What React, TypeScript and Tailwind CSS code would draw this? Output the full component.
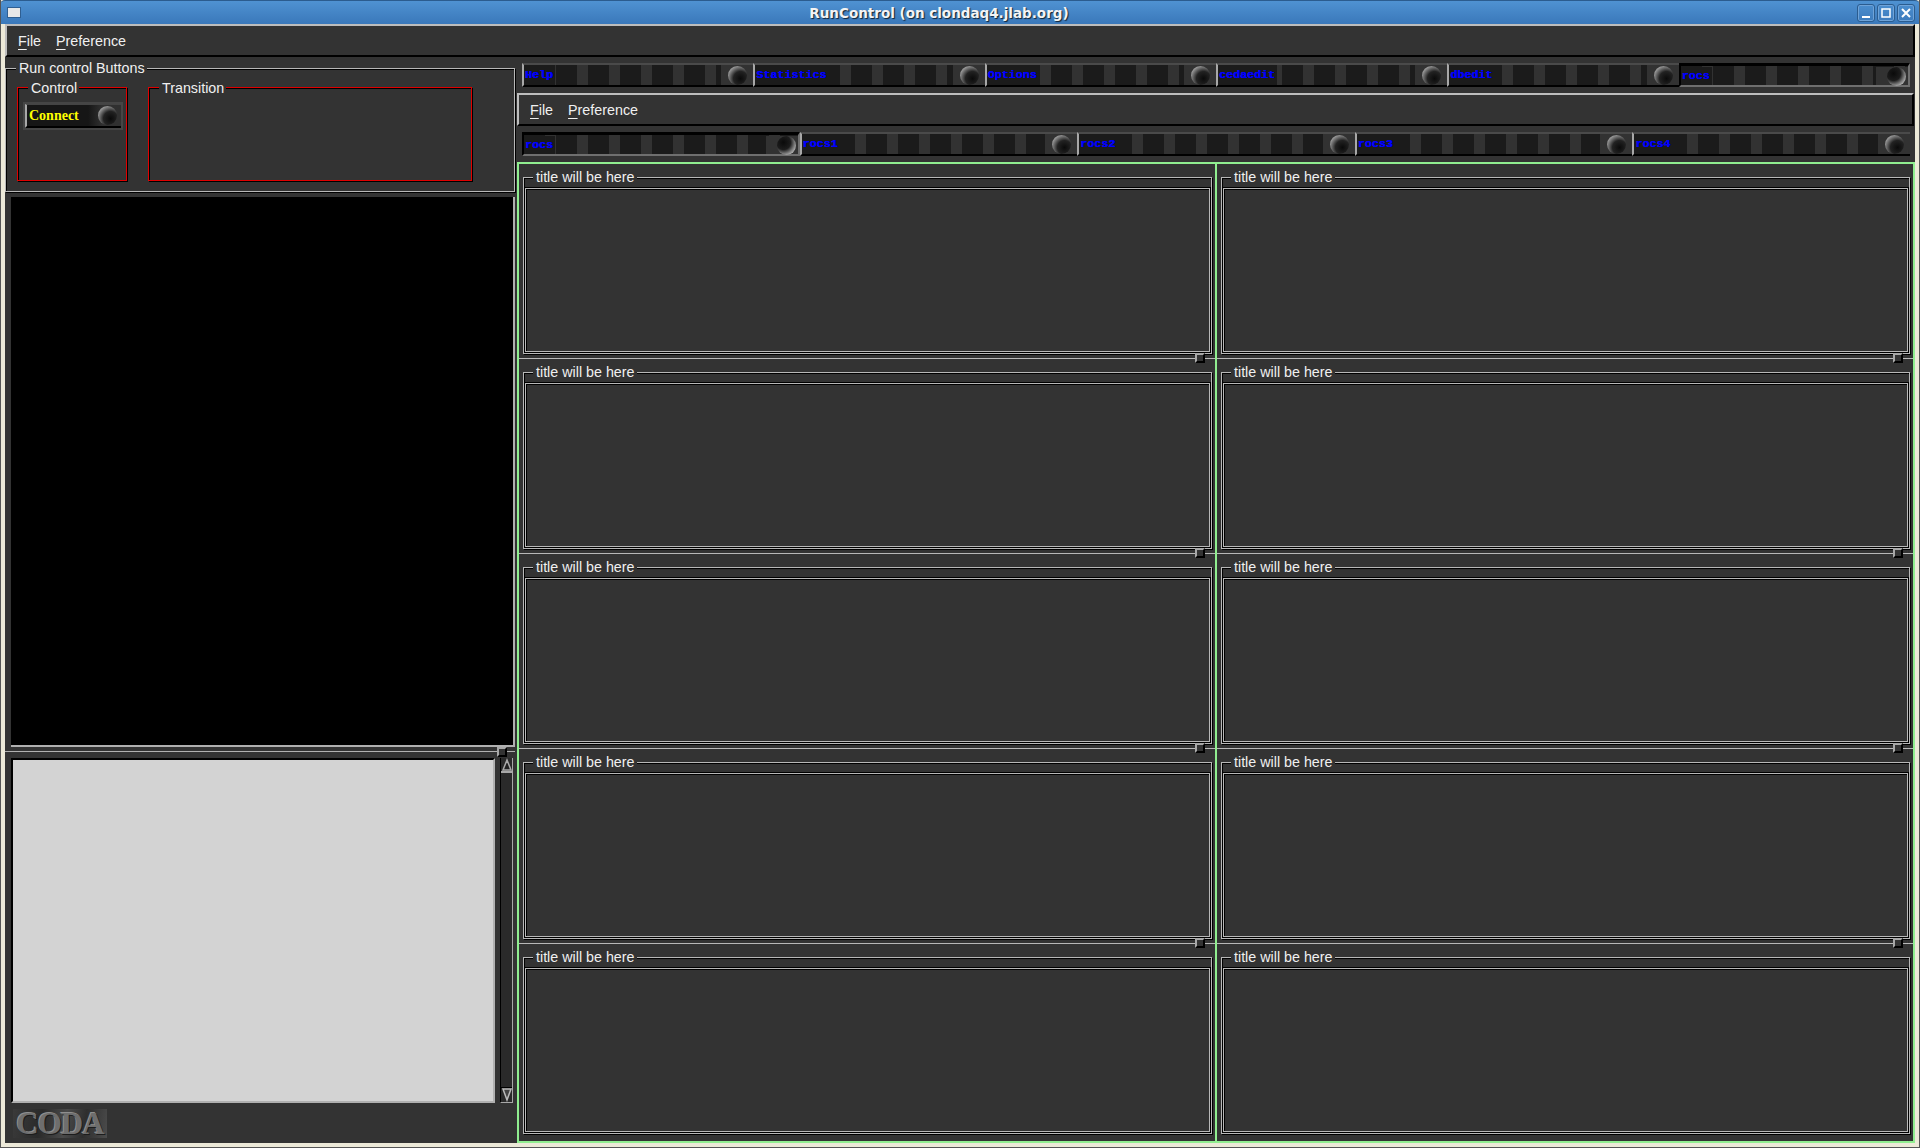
const sans = "font-['Liberation_Sans',Arial,sans-serif]";

function Knob({ pressed }: { pressed?: boolean }) {
  return (
    <span
      className={
        "block w-[19px] h-[19px] rounded-full " +
        (pressed
          ? "bg-[radial-gradient(circle_at_34%_34%,#0a0a0a_0,#1c1c1c_40%,#777_62%,#b5b5b5_78%)]"
          : "bg-[radial-gradient(circle_at_66%_66%,#0a0a0a_0,#222_40%,#6e6e6e_62%,#a5a5a5_78%)]")
      }
    />
  );
}

function TabButton({ label, pressed }: { label: string; pressed?: boolean }) {
  return (
    <div
      className={
        "h-6 flex items-center bg-[repeating-linear-gradient(90deg,#1b1b1b_0,#1b1b1b_21px,#323232_21px,#323232_32px)] " +
        (pressed
          ? "border-t-[3px] border-t-black border-b-2 border-b-[#6f6f6f] border-r-2 border-r-[#6f6f6f] border-l-2 border-l-black pt-px"
          : "border-l-2 border-l-[#a8a8a8] border-t-2 border-t-[#4a4a4a] border-b-2 border-b-black")
      }
    >
      <span className="h-full flex items-center pt-[2px] bg-[#1b1b1b] pl-px pr-0.5 font-['Liberation_Mono',monospace] font-bold text-[11.7px] text-[#0000ff] [text-shadow:0.4px_0_0_#0000ff]">
        {label}
      </span>
      <span
        className={
          "ml-auto w-[32px] h-full flex items-center justify-end bg-[#323232] " + (pressed ? "pr-[2px]" : "pr-[6px]")
        }
      >
        <Knob pressed={pressed} />
      </span>
    </div>
  );
}

function MenuBar() {
  return (
    <div className="h-[33px] shrink-0 flex items-center gap-[15px] pl-[11px] pt-[2px] border-t-2 border-l-2 border-[#bdbdbd] border-b-2 border-b-black border-r-2 border-r-black text-[14.3px] text-[#f0f0f0]">
      <span>
        <span className="underline decoration-1 underline-offset-[3px]">F</span>ile
      </span>
      <span>
        <span className="underline decoration-1 underline-offset-[3px]">P</span>reference
      </span>
    </div>
  );
}

function Legend({ text, inBox }: { text: string; inBox?: boolean }) {
  return (
    <span
      className={
        "absolute left-[10px] pl-[3px] pr-[2px] bg-[#333] text-[14.3px] leading-[16px] text-[#f0f0f0] whitespace-nowrap " +
        (inBox ? "-top-[8px]" : "-top-[9px]")
      }
    >
      {text}
    </span>
  );
}

function TitlePanel({ sash, className }: { sash: boolean; className: string }) {
  return (
    <div className={"relative h-[195px] pt-[13px] shrink-0 " + (sash ? "border-b border-b-[#b8b8b8] " : "") + className}>
      <div className="relative h-[177px] flex flex-col pt-[10px] px-px pb-px border border-[#b8b8b8] shadow-[inset_1px_1px_0_#000,1px_1px_0_#000]">
        <span className="absolute -top-[9px] left-[9px] pl-[3px] pr-[2px] bg-[#333] text-[14.3px] leading-[16px] text-[#f0f0f0] whitespace-nowrap">
          title will be here
        </span>
        <div className="flex-1 border border-[#b8b8b8] shadow-[inset_1px_1px_0_#000,0_0_0_1px_#000]" />
      </div>
      {sash && (
        <div className="absolute -bottom-[5px] right-[10px] w-[10px] h-[10px] bg-[#333] border-t-2 border-l-2 border-[#a8a8a8] border-r-2 border-r-black border-b-2 border-b-black" />
      )}
    </div>
  );
}

function WindowButton({ children }: { children: React.ReactNode }) {
  return (
    <div className="w-[18px] h-[18px] rounded-[3px] border border-[#2b5c8f] shadow-[inset_0_0_0_1px_#6fa3d8] flex items-center justify-center">
      <svg width="12" height="12" viewBox="0 0 12 12" fill="none" stroke="#fff" strokeWidth="2">
        {children}
      </svg>
    </div>
  );
}

const topTabs = ["Help", "Statistics", "Options", "cedaedit", "dbedit", "rocs"];
const rocTabs = ["rocs", "rocs1", "rocs2", "rocs3", "rocs4"];
const rows = [0, 1, 2, 3, 4];

export default function App() {
  return (
    <div className={"w-[1920px] h-[1148px] flex flex-col overflow-hidden bg-[#ece9d8] border-x border-b border-[#555] " + sans}>
      {/* Title bar */}
      <div className="h-6 shrink-0 -mx-px flex items-center pl-[7px] pr-[5px] rounded-t-[5px] bg-gradient-to-b from-[#4f92d2] to-[#3a78ba] border-t border-[#2b5c8f]">
        <div className="w-[14px] h-[11px] bg-[#e8e8e8] border border-[#2f5f92]" />
        <div className="flex-1 pt-px text-center font-['DejaVu_Sans',sans-serif] font-bold text-[13.5px] text-[#f4f4f4] [text-shadow:1px_1px_1px_#123]">
          RunControl (on clondaq4.jlab.org)
        </div>
        <div className="flex gap-[2px]">
          <WindowButton>
            <path d="M2 10h8" />
          </WindowButton>
          <WindowButton>
            <rect x="2" y="2" width="8" height="8" strokeWidth="1.5" />
          </WindowButton>
          <WindowButton>
            <path d="M2 2l8 8M10 2l-8 8" />
          </WindowButton>
        </div>
      </div>

      {/* Client area */}
      <div className="mx-[4px] h-[1119px] shrink-0 flex flex-col bg-[#333] text-[#f0f0f0]">
        <MenuBar />
        <div className="flex-1 flex min-h-0">
          {/* Left pane */}
          <div className="w-[512px] shrink-0 flex flex-col">
            <div className="relative mt-[11px] mr-[2px] h-[124px] shrink-0 flex gap-[21px] pl-[11px] pt-[18px] border border-[#b8b8b8] shadow-[inset_1px_1px_0_#000,1px_1px_0_#000]">
              <Legend text="Run control Buttons" />
              <div className="relative w-[110px] h-[94px] border border-[#e00000] shadow-[1px_1px_0_#000,inset_1px_1px_0_#000] pl-[5px] pt-[14px]">
                <Legend text="Control" inBox />
                <div className="w-[100px] h-[28px] bg-[#454545] p-[2px]">
                  <div className="h-full flex items-center justify-between pl-[2px] pr-[4px] bg-[linear-gradient(90deg,#161616_65%,#303030_80%)] border-l-2 border-l-[#a8a8a8] border-t border-t-[#444] border-b-2 border-b-black">
                    <span className="font-['Liberation_Serif',serif] font-bold text-[14px] text-[#ffff00]">Connect</span>
                    <Knob />
                  </div>
                </div>
              </div>
              <div className="relative w-[324px] h-[94px] border border-[#e00000] shadow-[1px_1px_0_#000,inset_1px_1px_0_#000]">
                <Legend text="Transition" inBox />
              </div>
            </div>

            {/* Canvas */}
            <div className="mt-[5px] ml-[6px] mr-[2px] h-[550px] shrink-0 bg-black border-r-2 border-r-[#b0b0b0] border-b-2 border-b-[#b0b0b0]" />

            {/* Sash */}
            <div className="relative h-[11px] shrink-0">
              <div className="mt-[4px] mr-[2px] h-px bg-[#b0b0b0]" />
              <div className="absolute top-0 left-[492px] w-[10px] h-[10px] bg-[#333] border-t-2 border-l-2 border-[#a8a8a8] border-r-2 border-r-black border-b-2 border-b-black" />
            </div>

            {/* Message log and scrollbar */}
            <div className="ml-[6px] h-[345px] shrink-0 flex gap-[5px]">
              <div className="w-[484px] bg-[#d3d3d3] border-t-2 border-l-2 border-black border-r-2 border-r-[#b0b0b0] border-b-2 border-b-[#b0b0b0]" />
              <div className="w-[13px] flex flex-col bg-[#2a2a2a] border-l border-l-black border-r border-r-[#a8a8a8] border-b border-b-[#a8a8a8]">
                <svg width="12" height="13" viewBox="0 0 12 13" className="shrink-0">
                  <path d="M6 2L2 12h8z" fill="#222" stroke="#aaa" strokeWidth="1.5" />
                </svg>
                <div className="flex-1 border-t-2 border-t-[#a8a8a8] border-b border-b-black" />
                <svg width="12" height="14" viewBox="0 0 12 14" className="shrink-0">
                  <path d="M2 1h8L6 12z" fill="#444" stroke="#bbb" strokeWidth="1.5" />
                </svg>
              </div>
            </div>

            {/* CODA logo */}
            <div className="mt-[6px] ml-[8px] w-[94px] h-[29px] flex items-center justify-center bg-[linear-gradient(100deg,#3a3a3a,#2a2a2a_30%,#4a4a4a_55%,#2e2e2e_75%,#4c4c4c)]">
              <span className="font-['Liberation_Serif',serif] font-bold text-[31px] leading-none tracking-[-1px] text-[#6e6e6e] [text-shadow:1px_1px_0_#1c1c1c,-1px_-1px_0_#8e8e8e]">
                CODA
              </span>
            </div>
          </div>

          {/* Right pane */}
          <div className="flex-1 min-w-0 flex flex-col">
            <div className="mt-[6px] ml-[5px] mr-[5px] grid grid-cols-6 shrink-0">
              {topTabs.map((t, i) => (
                <TabButton key={i} label={t} pressed={i === 5} />
              ))}
            </div>
            <div className="mt-[6px] mr-px">
              <MenuBar />
            </div>
            <div className="mt-[6px] ml-[5px] mr-[5px] grid grid-cols-5 shrink-0">
              {rocTabs.map((t, i) => (
                <TabButton key={i} label={t} pressed={i === 0} />
              ))}
            </div>
            <div className="mt-[6px] flex-1 min-h-0 flex border-2 border-[#90ee90]">
              <div className="w-[696px] shrink-0 flex flex-col border-r-2 border-r-[#90ee90] box-content">
                {rows.map((r) => (
                  <TitlePanel key={r} sash={r < 4} className="pl-[4px] pr-[3px]" />
                ))}
              </div>
              <div className="flex-1 min-w-0 flex flex-col">
                {rows.map((r) => (
                  <TitlePanel key={r} sash={r < 4} className="pl-[4px] pr-[3px]" />
                ))}
              </div>
            </div>
          </div>
        </div>
      </div>
    </div>
  );
}
